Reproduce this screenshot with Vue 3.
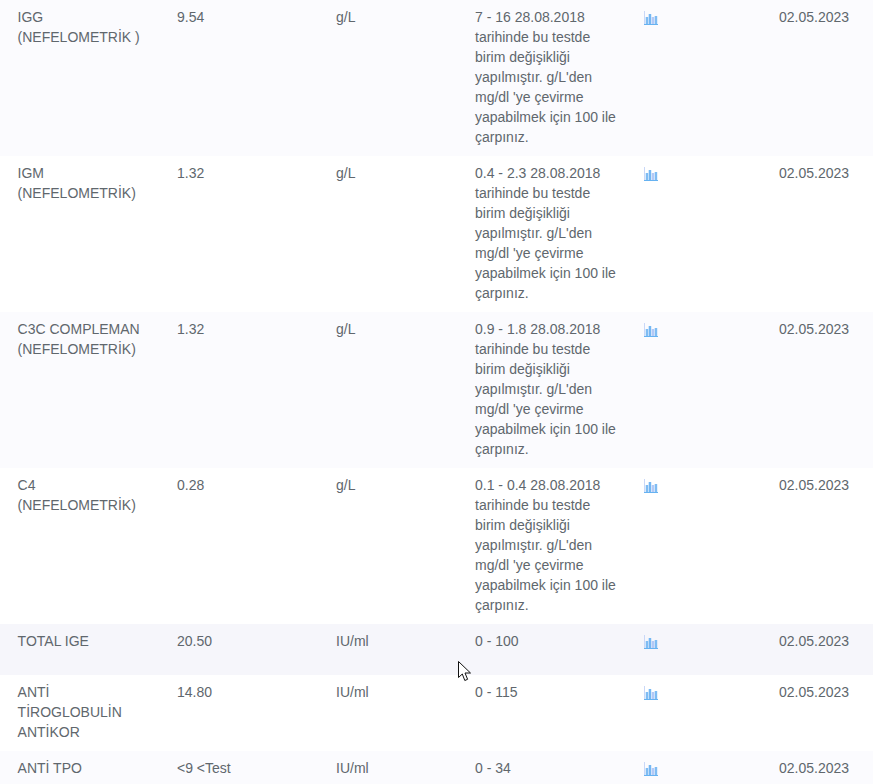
<script setup>
const note = "28.08.2018 tarihinde bu testde birim değişikliği yapılmıştır. g/L'den mg/dl 'ye çevirme yapabilmek için 100 ile çarpınız.";
const rows = [
  { name: 'IGG (NEFELOMETRİK )', value: '9.54', unit: 'g/L', range: `7 - 16 ${note}` },
  { name: 'IGM (NEFELOMETRİK)', value: '1.32', unit: 'g/L', range: `0.4 - 2.3 ${note}` },
  { name: 'C3C COMPLEMAN (NEFELOMETRİK)', value: '1.32', unit: 'g/L', range: `0.9 - 1.8 ${note}` },
  { name: 'C4 (NEFELOMETRİK)', value: '0.28', unit: 'g/L', range: `0.1 - 0.4 ${note}` },
  { name: 'TOTAL IGE', value: '20.50', unit: 'IU/ml', range: '0 - 100', hover: true },
  { name: 'ANTİ TİROGLOBULİN ANTİKOR', value: '14.80', unit: 'IU/ml', range: '0 - 115' },
  { name: 'ANTİ TPO', value: '<9 <Test', unit: 'IU/ml', range: '0 - 34' },
];
</script>

<template>
  <div class="table">
    <div v-for="(r, i) in rows" :key="i" class="row" :class="{ odd: i % 2 === 0, hover: r.hover }">
      <div class="cell name">{{ r.name }}</div>
      <div class="cell">{{ r.value }}</div>
      <div class="cell">{{ r.unit }}</div>
      <div class="cell range">{{ r.range }}</div>
      <div class="cell icon">
        <svg width="14" height="14" viewBox="0 0 14 14">
          <rect x="0" y="0" width="1" height="14" fill="#c9d8f8" />
          <rect x="1.7" y="6" width="2.5" height="7" fill="#7fbcf3" />
          <rect x="4.7" y="3" width="2.5" height="10" fill="#74b7f3" />
          <rect x="7.7" y="6" width="2.5" height="7" fill="#b3c9f6" />
          <rect x="10.7" y="5" width="2.5" height="8" fill="#7fbcf3" />
          <rect x="0" y="13" width="14" height="1" fill="#66b2f1" />
        </svg>
      </div>
      <div class="cell date">02.05.2023</div>
    </div>
    <svg class="cursor" width="14" height="21" viewBox="0 0 14 21">
      <path d="M0.5 0.5V16.5L4.3 13L6.8 19.5L9.6 18.3L7 12H12.5Z" fill="#fff" stroke="#111" stroke-width="1" />
    </svg>
  </div>
</template>

<style scoped>
.table {
  position: relative;
  width: 873px;
  height: 784px;
  overflow: hidden;
  background: #fff;
  color: #60676d;
  font: 14px/20px "Liberation Sans", Arial, sans-serif;
}
.row {
  display: grid;
  grid-template-columns: 177px 159px 139px 169px 135px 94px;
}
.row.odd { background: #fbfbfe; }
.row.hover { background: #f6f6fb; }
.cell {
  padding: 7px 0 9px;
}
.name {
  padding-left: 17.6px;
  padding-right: 25px;
}
.range { padding-right: 25px; }
.icon {
  height: 51px;
  box-sizing: border-box;
  padding-top: 11px;
}
.icon svg { display: block; }
.date {
  padding-right: 26px;
  text-align: right;
}
.cursor {
  position: absolute;
  left: 458px;
  top: 661px;
}
</style>

<style>
html, body { margin: 0; background: #fff; }
</style>
